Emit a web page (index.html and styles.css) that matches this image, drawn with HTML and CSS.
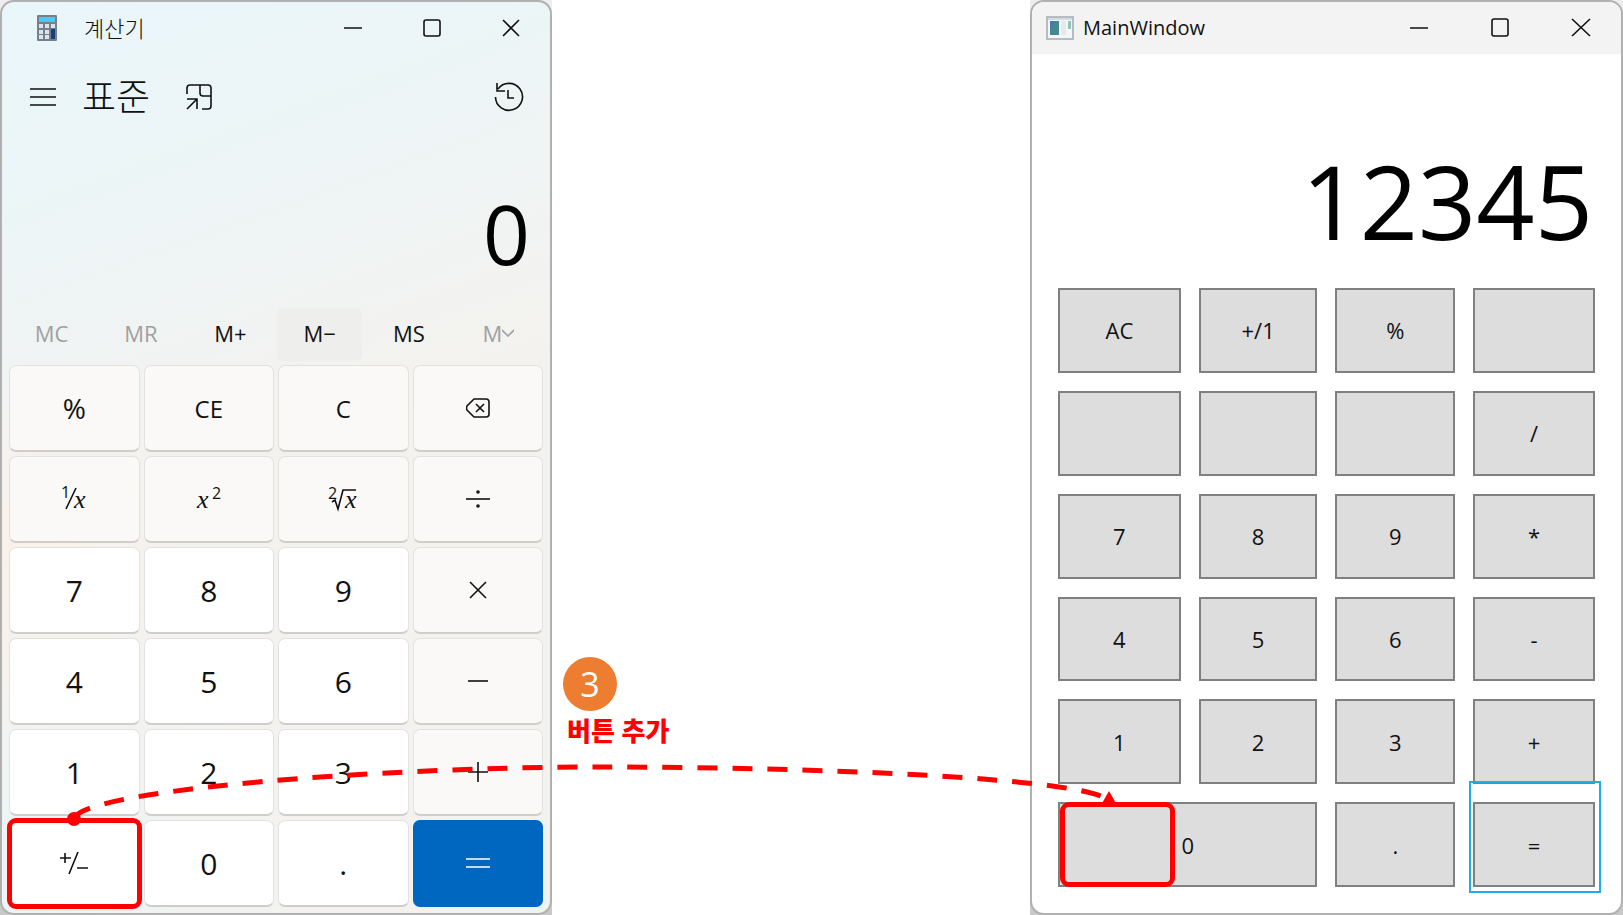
FILE: index.html
```
<!DOCTYPE html>
<html lang="ko">
<head>
    <meta charset="UTF-8">
    <meta name="viewport" content="width=device-width, initial-scale=1.0">
    <title>계산기 버튼 추가</title>
    <link rel="stylesheet" href="styles.css">
</head>
<body>
    <main class="stage">
        <section class="pane">
            <div class="window calc">
                <header class="titlebar">
                    <svg class="app-icon" width="20" height="26" viewBox="0 0 20 26">
                        <rect width="20" height="26" rx="1" fill="#75808c"/>
                        <rect x="2" y="2" width="16" height="5" fill="#3fd0f5"/>
                        <path d="M2 9h4v4H2zM8 9h4v4H8zM14 9h4v4h-4zM2 15h4v4H2zM8 15h4v4H8zM2 20h4v4H2zM8 20h4v4H8z" fill="#dde3ec"/>
                        <rect x="14" y="14" width="4" height="10" fill="#123f82"/>
                    </svg>
                    <h1 class="title">계산기</h1>
                    <div class="window-buttons">
                        <button aria-label="최소화"><svg width="20" height="20" viewBox="0 0 20 20"><path d="M1 10h18"/></svg></button>
                        <button aria-label="최대화"><svg width="20" height="20" viewBox="0 0 20 20"><rect x="2" y="2" width="16" height="16" rx="2"/></svg></button>
                        <button aria-label="닫기"><svg width="20" height="20" viewBox="0 0 20 20"><path d="M2 2l16 16M18 2L2 18"/></svg></button>
                    </div>
                </header>
                <nav class="nav">
                    <button aria-label="메뉴"><svg width="26" height="26" viewBox="0 0 26 26"><path d="M0 5h26M0 13h26M0 21h26"/></svg></button>
                    <h2 class="mode">표준</h2>
                    <button aria-label="항상 위에 유지"><svg width="26" height="26" viewBox="0 0 26 26"><path d="M1 10V4q0-3 3-3h18q3 0 3 3v18q0 3-3 3h-6M14 1v8q0 3 3 3h8M1 15h10v10M11 15L1 25"/></svg></button>
                    <button class="history" aria-label="기록"><svg width="30" height="30" viewBox="0 0 30 30"><path d="M1.500 15A13.500 13.500 0 1 0 4 7M3 1v8h8M14 8v8h6"/></svg></button>
                </nav>
                <output class="display">0</output>
                <div class="memory">
                    <button disabled>MC</button>
                    <button disabled>MR</button>
                    <button>M+</button>
                    <button class="hover">M−</button>
                    <button>MS</button>
                    <button disabled>M<svg width="12" height="8" viewBox="0 0 12 8"><path d="M0 1l6 6 6-6"/></svg></button>
                </div>
                <div class="keys">
                    <button class="percent">%</button>
                    <button class="word">CE</button>
                    <button class="word">C</button>
                    <button aria-label="백스페이스"><svg width="24" height="20" viewBox="0 0 24 20"><path d="M8 1h12q3 0 3 3v12q0 3-3 3H8L1 12q-1-2 0-4zM10 6l8 8M18 6l-8 8"/></svg></button>
                    <button aria-label="역수"><svg width="40" height="40" viewBox="0 0 40 40"><text class="small" x="7" y="19">1</text><path d="M22 9L12 30"/><text class="var" x="20" y="29">x</text></svg></button>
                    <button aria-label="제곱"><svg width="40" height="40" viewBox="0 0 40 40"><text class="var" x="8" y="29">x</text><text class="small" x="23" y="20">2</text></svg></button>
                    <button aria-label="제곱근"><svg width="40" height="40" viewBox="0 0 40 40"><text class="small" x="5" y="20">2</text><path d="M9 23l3-2 3 9 5-19h13"/><text class="var" x="22" y="29">x</text></svg></button>
                    <button aria-label="나누기"><svg width="24" height="24" viewBox="0 0 24 24"><path d="M0 12h24"/><circle cx="12" cy="5" r="1"/><circle cx="12" cy="19" r="1"/></svg></button>
                    <button class="num">7</button>
                    <button class="num">8</button>
                    <button class="num">9</button>
                    <button aria-label="곱하기"><svg width="24" height="24" viewBox="0 0 24 24"><path d="M4 4l16 16M20 4L4 20"/></svg></button>
                    <button class="num">4</button>
                    <button class="num">5</button>
                    <button class="num">6</button>
                    <button aria-label="빼기"><svg width="24" height="24" viewBox="0 0 24 24"><path d="M2 12h20"/></svg></button>
                    <button class="num">1</button>
                    <button class="num">2</button>
                    <button class="num">3</button>
                    <button aria-label="더하기"><svg width="24" height="24" viewBox="0 0 24 24"><path d="M2 12h20M12 2v20"/></svg></button>
                    <button class="num picked" aria-label="부호 바꾸기"><svg width="28" height="26" viewBox="0 0 28 26"><path d="M0 8h11M5 3v10M18 2L9 24M17 18h11"/></svg></button>
                    <button class="num">0</button>
                    <button class="num">.</button>
                    <button class="equal" aria-label="계산"><svg width="24" height="24" viewBox="0 0 24 24"><path d="M0 8h24M0 16h24"/></svg></button>
                </div>
            </div>
        </section>

        <section class="note">
            <span class="step">3</span>
            <p class="note-text">버튼 추가</p>
        </section>

        <section class="pane">
            <div class="window wpf">
                <header class="titlebar">
                    <svg class="app-icon" width="28" height="24" viewBox="0 0 28 24">
                        <rect x="1" y="1" width="26" height="22" fill="#f4f6f8" stroke="#b4bcc4" stroke-width="2"/>
                        <path d="M2 3h24" stroke="#d4dbe2" stroke-width="2"/>
                        <rect x="4" y="5" width="9" height="14" fill="#43898f"/>
                        <path d="M4 5h5L4 15z" fill="#4679ad"/>
                        <rect x="15" y="5" width="5" height="14" fill="#e6e9ec"/>
                        <rect x="22" y="5" width="3" height="8" fill="#8fc5b6"/>
                    </svg>
                    <h1 class="title">MainWindow</h1>
                    <div class="window-buttons">
                        <button aria-label="Minimize"><svg width="20" height="20" viewBox="0 0 20 20"><path d="M1 10h18"/></svg></button>
                        <button aria-label="Maximize"><svg width="20" height="20" viewBox="0 0 20 20"><rect x="2" y="1" width="16" height="17" rx="2"/></svg></button>
                        <button aria-label="Close"><svg width="20" height="20" viewBox="0 0 20 20"><path d="M1 1l18 17M19 1L1 18"/></svg></button>
                    </div>
                </header>
                <output class="display">12345</output>
                <div class="keys">
                    <button>AC</button>
                    <button>+/1</button>
                    <button>%</button>
                    <button></button>
                    <button></button>
                    <button></button>
                    <button></button>
                    <button>/</button>
                    <button>7</button>
                    <button>8</button>
                    <button>9</button>
                    <button>*</button>
                    <button>4</button>
                    <button>5</button>
                    <button>6</button>
                    <button>-</button>
                    <button>1</button>
                    <button>2</button>
                    <button>3</button>
                    <button>+</button>
                    <button class="zero">0</button>
                    <button>.</button>
                    <button class="selected">=</button>
                </div>
            </div>
        </section>

        <svg class="arrow" viewBox="0 0 1623 915" preserveAspectRatio="none">
            <path class="dash" d="M74 819C80 790 380 767 600 767S1070 778 1105 798"/>
            <circle cx="74" cy="819" r="7"/>
            <path class="head" d="M1109 791l8 14h-16z"/>
        </svg>
    </main>
</body>
</html>
```
FILE: styles.css
```
* {
    box-sizing: border-box;
}
body {
    margin: 0;
    background: white;
    color: #111;
    font-family: "Open Sans", "Noto Sans CJK KR", sans-serif;
}
h1, h2, p {
    margin: 0;
    font-weight: normal;
}
button {
    display: flex;
    justify-content: center;
    align-items: center;
    padding: 0;
    border: none;
    background: none;
    color: inherit;
    font-family: inherit;
    cursor: pointer;
}
button svg {
    fill: none;
    stroke: currentColor;
    stroke-width: 1.6;
}
.stage {
    position: relative;
    display: grid;
    grid-template-columns: 552fr 478fr 593fr;
    min-height: 100vh;
}
.pane {
    display: flex;
    background: linear-gradient(#eee, #c8c8c8);
}
.window {
    flex: 1;
    display: flex;
    flex-direction: column;
    border: 2px solid #b0b0b0;
    border-radius: 14px;
    overflow: hidden;
}

/* title bar */
.titlebar {
    display: flex;
    align-items: center;
    height: 52px;
}
.title {
    font-size: 20px;
    line-height: 28px;
}
.window-buttons {
    display: flex;
    margin-left: auto;
}
.window-buttons button {
    width: 79px;
    height: 52px;
}

/* windows calculator */
.calc {
    padding: 0 7px 6px;
    background:
        radial-gradient(circle at 0 62%, #faf0ea 0, rgba(250, 240, 234, 0) 22%),
        radial-gradient(circle at 0 100%, #edf5f7 0, rgba(237, 245, 247, 0) 32%),
        linear-gradient(160deg, #e9f6fa 0, #ecf5f6 20%, #f1f3f2 38%, #f4f2ee 50%);
}
.calc .titlebar {
    padding-left: 28px;
}
.calc .title {
    margin-left: 27px;
    font-size: 22px;
    font-weight: 300;
}
.calc .window-buttons {
    margin-right: -7px;
}
.nav {
    display: flex;
    align-items: center;
    height: 86px;
    padding: 0 19px 0 21px;
}
.mode {
    margin: 0 36px 0 26px;
    font-size: 37px;
    font-weight: 300;
    line-height: 48px;
}
.history {
    margin-left: auto;
}
.calc .display {
    flex: 1;
    display: flex;
    justify-content: flex-end;
    align-items: center;
    padding: 18px 13px 0 0;
    color: black;
    font-size: 82px;
    line-height: 96px;
}
.memory {
    display: grid;
    grid-template-columns: repeat(6, 1fr);
    gap: 4px;
    height: 53px;
    margin: 0 2px 4px 0;
}
.memory button {
    padding-bottom: 4px;
    border-radius: 6px;
    font-size: 22px;
}
.memory button:disabled {
    color: #a0a0a0;
}
.memory .hover {
    background: #eeefed;
}
.calc .keys {
    flex: 0 0 542px;
    display: grid;
    grid-template-columns: repeat(4, 1fr);
    grid-auto-rows: 1fr;
    gap: 4px;
}
.calc .keys button {
    border: 1px solid #e3e2df;
    border-bottom: 2px solid #cfcecb;
    border-radius: 7px;
    background: #faf9f8;
    font-size: 30px;
}
.calc .keys .word {
    font-size: 24px;
}
.calc .keys .percent {
    font-size: 28px;
}
.calc .keys .num {
    background: white;
}
.calc .keys .equal {
    border-color: #0067c0;
    background: #0067c0;
    color: white;
}
.calc .keys text {
    fill: currentColor;
    stroke: none;
}
.small {
    font-size: 16px;
}
.var {
    font-family: "Liberation Serif", serif;
    font-size: 26px;
    font-style: italic;
}
.picked {
    outline: 5px solid red;
    outline-offset: -3px;
}

/* note between the windows */
.note {
    display: flex;
    flex-direction: column;
    align-items: flex-start;
    justify-content: flex-end;
    padding: 0 11px 164px;
}
.step {
    width: 54px;
    height: 54px;
    border-radius: 50%;
    background: #ed7d31;
    color: white;
    font-size: 34px;
    line-height: 54px;
    text-align: center;
}
.note-text {
    margin-left: 4px;
    color: red;
    font-size: 26px;
    font-weight: 900;
    line-height: 40px;
}

/* MainWindow */
.wpf {
    background: white;
}
.wpf .titlebar {
    padding-left: 14px;
    background: #f3f3f3;
}
.wpf .title {
    margin-left: 9px;
}
.wpf .window-buttons button {
    width: 81px;
}
.wpf .display {
    flex: 0 0 234px;
    display: flex;
    justify-content: flex-end;
    align-items: center;
    padding: 60px 28px 0 0;
    color: black;
    font-size: 102px;
    line-height: 120px;
}
.wpf .keys {
    flex: 1;
    display: grid;
    grid-template-columns: 123fr 119fr 120fr 122fr;
    grid-auto-rows: 1fr;
    gap: 18px;
    padding: 0 26px 26px;
}
.wpf .keys button {
    position: relative;
    border: 2px solid #808080;
    background: #ddd;
    font-size: 22px;
}
.wpf .keys .zero {
    grid-column: span 2;
}
/* outline of the new button on the left part of 0 */
.zero::before {
    content: "";
    position: absolute;
    top: -2px;
    bottom: -2px;
    left: 0;
    right: 55%;
    border: 5px solid red;
    border-radius: 9px;
}
.selected::before {
    content: "";
    position: absolute;
    inset: -23px -8px -8px -6px;
    border: 2px solid #1caee8;
}

.arrow {
    position: absolute;
    inset: 0;
    width: 100%;
    height: 100%;
    fill: red;
    pointer-events: none;
}
.dash {
    fill: none;
    stroke: red;
    stroke-width: 5;
    stroke-dasharray: 20 15;
}
```
